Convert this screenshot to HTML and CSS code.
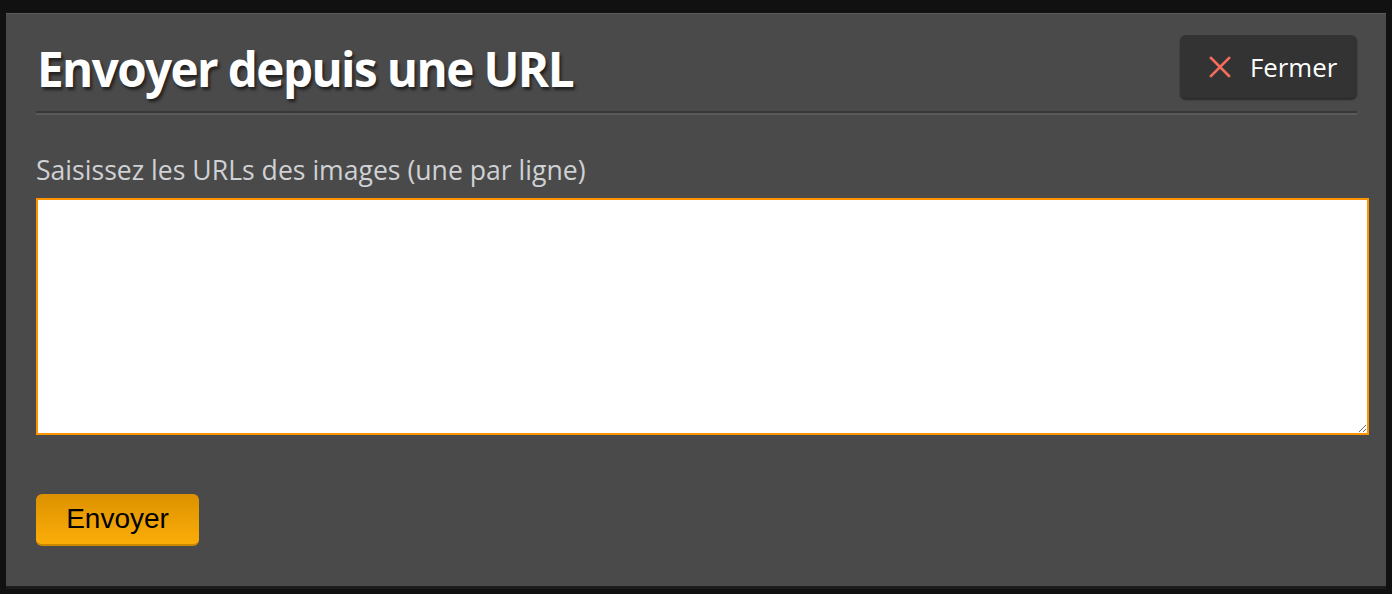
FILE: index.html
```html
<!DOCTYPE html>
<html lang="fr">
<head>
<meta charset="utf-8">
<title>Envoyer depuis une URL</title>
<link rel="stylesheet" href="styles.css">
</head>
<body>
<div class="modal">
  <div class="modal-header">
    <h1 class="modal-title">Envoyer depuis une URL</h1>
    <button class="close-btn" type="button">
      <svg class="close-icon" width="22" height="22" viewBox="0 0 22 22" aria-hidden="true">
        <path d="M2 2 L20 20 M20 2 L2 20" stroke="#f76d5c" stroke-width="2.6" stroke-linecap="square" fill="none"/>
      </svg>
      <span>Fermer</span>
    </button>
  </div>
  <hr class="divider">
  <label class="field-label" for="urls">Saisissez les URLs des images (une par ligne)</label>
  <textarea id="urls" class="urls"></textarea>
  <button class="submit-btn" type="button">Envoyer</button>
</div>
</body>
</html>
```
FILE: styles.css
```css
html, body {
  margin: 0;
  padding: 0;
  background: #111111;
  height: 100%;
}

.modal {
  box-sizing: border-box;
  margin: 13px 6px 0 6px;
  width: 1380px;
  height: 573px;
  background: #4a4a4a;
  border-top: 1px solid #5c5c5c;
  box-shadow: 0 3px 0 #1c1c1c;
  padding: 21px 29px 40px 30px;
  display: flex;
  flex-direction: column;
  font-family: "Open Sans", "Noto Sans", sans-serif;
}

.modal-header {
  display: flex;
  justify-content: space-between;
  align-items: center;
  height: 63px;
}

.modal-title {
  margin: 0;
  color: #ffffff;
  font-size: 47.6px;
  font-weight: 700;
  letter-spacing: -1.6px;
  line-height: 1;
  text-shadow: 2px 3px 3px rgba(0, 0, 0, 0.55);
  padding-left: 1px;
  position: relative;
  top: 2px;
}

.close-btn {
  box-sizing: border-box;
  width: 177px;
  height: 63px;
  background: #333333;
  border: none;
  border-radius: 6px;
  box-shadow: 0 2px 2px rgba(0, 0, 0, 0.45);
  display: flex;
  align-items: center;
  padding: 0 0 0 29px;
  gap: 19px;
  color: #ffffff;
  font-family: "Open Sans", "Noto Sans", sans-serif;
  font-size: 25.8px;
  cursor: pointer;
}

.close-icon {
  flex: none;
}

.divider {
  margin: 13px 0 0 0;
  height: 0;
  border: none;
  border-top: 2px solid #383838;
  border-bottom: 2px solid #5a5a5a;
}

.field-label {
  margin-top: 40px;
  color: #cfd1d4;
  font-size: 26.6px;
  line-height: 30px;
  letter-spacing: 0;
}

.urls {
  display: block;
  margin-top: 13px;
  width: 100%;
  height: 225px;
  padding: 4px;
  border: 2px solid #ff9400;
  background: #ffffff;
  font-family: "Liberation Mono", monospace;
  font-size: 14px;
  outline: none;
  resize: both;
}

.submit-btn {
  margin-top: auto;
  align-self: flex-start;
  box-sizing: border-box;
  width: 163px;
  height: 52px;
  border: none;
  border-bottom: 2px solid #c98a00;
  border-radius: 6px;
  background: linear-gradient(to bottom, #dc9200, #fbad08);
  color: #000000;
  font-family: "Liberation Sans", Arial, sans-serif;
  font-size: 28px;
  padding: 0;
  cursor: pointer;
}
```
